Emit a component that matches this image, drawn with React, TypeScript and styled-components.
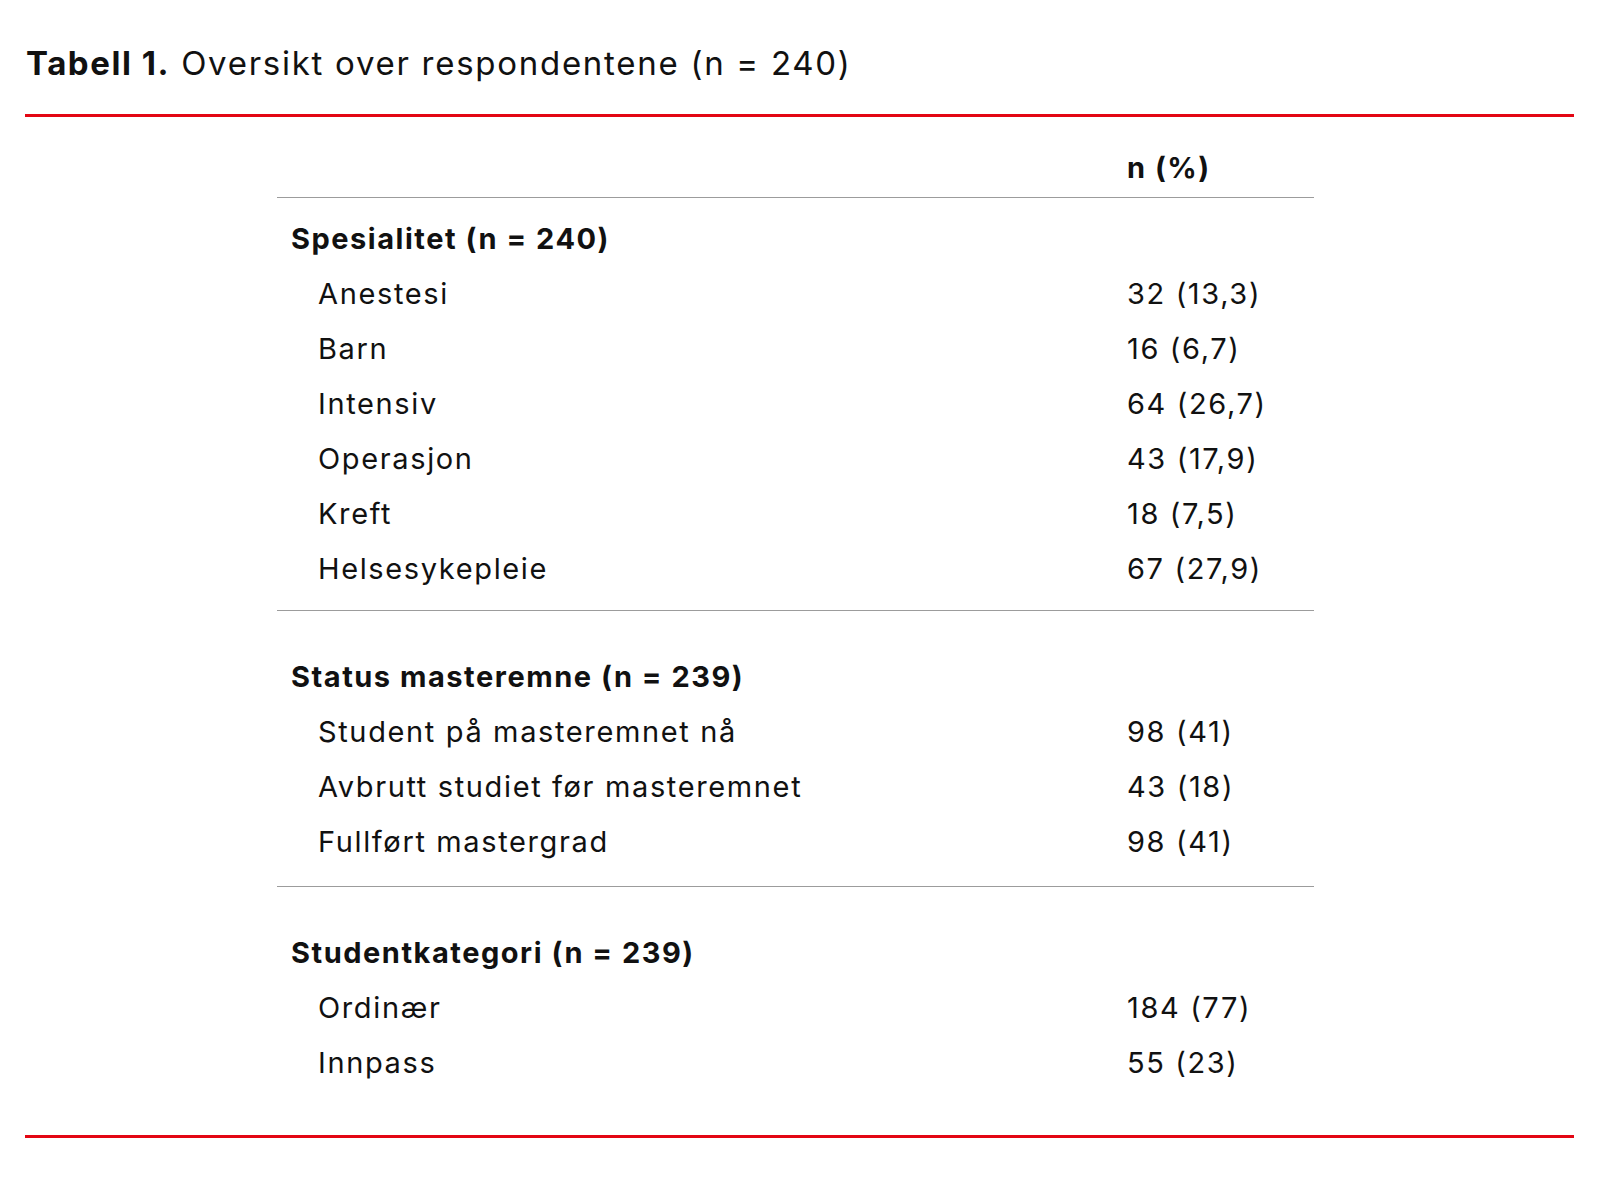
import React from "react";
import styled, { createGlobalStyle } from "styled-components";

const Global = createGlobalStyle`
  html, body { margin: 0; padding: 0; background: #ffffff; }
  body { font-family: Inter, "Noto Sans", "Liberation Sans", sans-serif; color: #111111; }
`;

const Page = styled.div`
  padding: 44px 26px 0 25px;
  box-sizing: border-box;
  width: 1600px;
`;

const Title = styled.h1`
  margin: 0;
  padding-left: 1px;
  font-size: 33px;
  line-height: 39.6px;
  font-weight: 400;
  letter-spacing: 1.72px;
  white-space: nowrap;
`;

const TitleBold = styled.span`
  font-weight: 700;
  letter-spacing: 1.55px;
`;

const RedRule = styled.div<{ $top: number }>`
  height: 3px;
  background: #e30613;
  margin-top: ${(p) => p.$top}px;
`;

const Table = styled.div`
  width: 1037px;
  margin: 23px 0 0 252px;
  display: flex;
  flex-direction: column;
`;

const HeaderRow = styled.div`
  display: grid;
  grid-template-columns: 850px 1fr;
  height: 55px;
  line-height: 55px;
  font-size: 29px;
  font-weight: 700;
  letter-spacing: 1.5px;
  border-bottom: 1.5px solid #9c9c9c;
  padding-bottom: 2px;
`;

const Section = styled.div<{ $top: number; $bottom: number; $last?: boolean }>`
  padding-top: ${(p) => p.$top}px;
  padding-bottom: ${(p) => p.$bottom}px;
  border-bottom: ${(p) => (p.$last ? "none" : "1.5px solid #9c9c9c")};
`;

const Row = styled.div<{ $head?: boolean }>`
  display: grid;
  grid-template-columns: 850px 1fr;
  height: 55px;
  line-height: 55px;
  font-size: 29px;
  font-weight: ${(p) => (p.$head ? 700 : 400)};
  letter-spacing: ${(p) => (p.$head ? 1.52 : 1.63)}px;
`;

const Label = styled.div<{ $indent: number }>`
  padding-left: ${(p) => p.$indent}px;
  white-space: nowrap;
`;

const Value = styled.div`
  white-space: nowrap;
`;

type Sec = { head: string; rows: [string, string][]; top: number; bottom: number };

const sections: Sec[] = [
  {
    head: "Spesialitet (n = 240)",
    top: 13,
    bottom: 14,
    rows: [
      ["Anestesi", "32 (13,3)"],
      ["Barn", "16 (6,7)"],
      ["Intensiv", "64 (26,7)"],
      ["Operasjon", "43 (17,9)"],
      ["Kreft", "18 (7,5)"],
      ["Helsesykepleie", "67 (27,9)"],
    ],
  },
  {
    head: "Status masteremne (n = 239)",
    top: 38,
    bottom: 17,
    rows: [
      ["Student på masteremnet nå", "98 (41)"],
      ["Avbrutt studiet før masteremnet", "43 (18)"],
      ["Fullført mastergrad", "98 (41)"],
    ],
  },
  {
    head: "Studentkategori (n = 239)",
    top: 38,
    bottom: 0,
    rows: [
      ["Ordinær", "184 (77)"],
      ["Innpass", "55 (23)"],
    ],
  },
];

export default function App() {
  return (
    <>
      <Global />
      <Page>
        <Title>
          <TitleBold>Tabell 1.</TitleBold> Oversikt over respondentene (n = 240)
        </Title>
        <RedRule $top={30} />
        <Table>
          <HeaderRow>
            <span />
            <Value>n (%)</Value>
          </HeaderRow>
          {sections.map((s, i) => (
            <Section key={s.head} $top={s.top} $bottom={s.bottom} $last={i === sections.length - 1}>
              <Row $head>
                <Label $indent={14}>{s.head}</Label>
                <span />
              </Row>
              {s.rows.map(([l, v]) => (
                <Row key={l}>
                  <Label $indent={41}>{l}</Label>
                  <Value>{v}</Value>
                </Row>
              ))}
            </Section>
          ))}
        </Table>
        <RedRule $top={45} />
      </Page>
    </>
  );
}
